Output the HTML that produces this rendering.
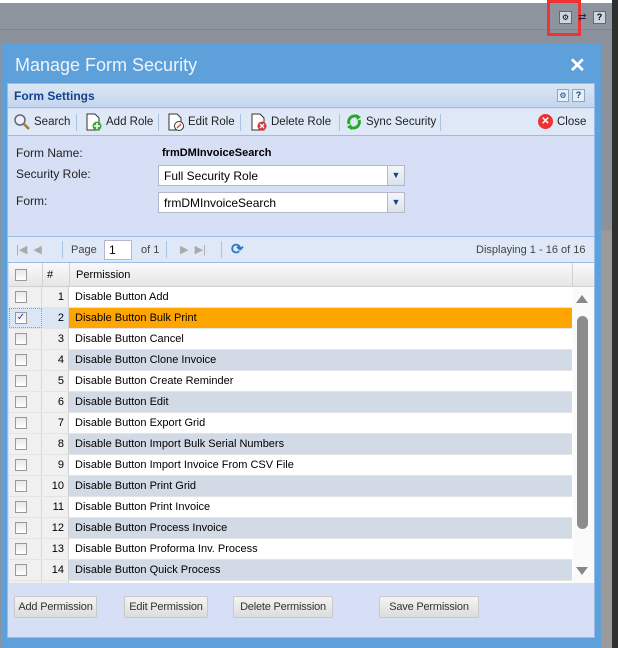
<!DOCTYPE html>
<html><head><meta charset="utf-8"><style>
*{box-sizing:border-box;margin:0;padding:0}
body{width:618px;height:648px;overflow:hidden;background:#8b929c;font-family:"Liberation Sans",sans-serif;font-size:11px;color:#000;position:relative}
.a{position:absolute}
.cb{position:absolute;width:12px;height:12px;border:1px solid #999;background:linear-gradient(#e8e8e8,#fff)}
.row{position:absolute;left:9px;width:563px;height:21px;border-bottom:1px solid #e4e4e4}
.row .c1{position:absolute;left:0;width:33px;height:20px;background:#f0f0f0;border-right:1px solid #d8d8d8}
.row .c2{position:absolute;left:33px;width:27px;height:20px;background:#f0f0f0;border-right:1px solid #d0d0d0;text-align:right;padding-right:4px;line-height:20px}
.row .c3{position:absolute;left:60px;right:0;height:20px;line-height:20px;padding-left:6px}
.btn{position:absolute;top:596px;height:22px;border:1px solid #c8c8c8;border-radius:2px;background:linear-gradient(#f4f4f4,#dcdcdc);text-align:center;line-height:20px;color:#333;white-space:nowrap;font-size:11px;letter-spacing:-0.2px}
.tb{position:absolute;top:116px;color:#222;font-size:11.5px;white-space:nowrap}
.sep{position:absolute;width:1px;height:17px;background:#a9c3e2}
svg.ic{position:absolute;top:113px}
</style></head><body>
<div class="a" style="left:0;top:0;width:618px;height:3px;background:#fff"></div>
<div class="a" style="left:0;top:3px;width:612px;height:27px;background:#8d949e;border-bottom:1px solid #7b8593"></div>
<div class="a" style="left:612px;top:0;width:6px;height:648px;background:#2f2f2f"></div>
<div class="a" style="left:601px;top:230px;width:11px;height:418px;background:#9a9a9a"></div>
<div class="a" style="left:547px;top:0;width:34px;height:36px;border:3px solid #e33"></div>
<div class="a" style="left:559px;top:11px;width:13px;height:13px;background:#cfd6e0;border:1px solid #667;font-size:8px;text-align:center;line-height:11px">⚙</div>
<div class="a" style="left:578px;top:11px;width:12px;height:13px;color:#224;font-size:10px;line-height:13px">⇄</div>
<div class="a" style="left:593px;top:11px;width:13px;height:13px;background:#cfd6e0;border:1px solid #667;font-size:9px;font-weight:bold;text-align:center;line-height:11px">?</div>

<div class="a" style="left:1px;top:43px;width:600px;height:605px;background:#5ea0da"></div>
<div class="a" style="left:15px;top:55px;color:#eef4fb;font-size:18px">Manage Form Security</div>
<div class="a" style="left:569px;top:53px;color:#fff;font-size:20px;font-weight:bold">✕</div>

<div class="a" style="left:7px;top:83px;width:588px;height:555px;background:#d6dff5;border:1px solid #99bbe8"></div>
<div class="a" style="left:8px;top:84px;width:586px;height:24px;background:linear-gradient(#dae6f5,#c4d6ee);border-bottom:1px solid #99bbe8"></div>
<div class="a" style="left:14px;top:89px;color:#15428b;font-weight:bold;font-size:12px">Form Settings</div>
<div class="a" style="left:557px;top:89px;width:12px;height:13px;background:#e6eef9;border:1px solid #8ab;font-size:8px;text-align:center;line-height:11px;color:#15428b">⚙</div>
<div class="a" style="left:572px;top:89px;width:13px;height:13px;background:#e6eef9;border:1px solid #8ab;font-size:9px;font-weight:bold;text-align:center;line-height:11px;color:#15428b">?</div>
<div class="a" style="left:8px;top:109px;width:586px;height:27px;background:#dfe8f6;border-bottom:1px solid #99bbe8"></div>
<svg class="ic" style="left:13px" width="18" height="18"><circle cx="7" cy="7" r="5" fill="#eef" stroke="#667" stroke-width="1.5"/><line x1="10.5" y1="10.5" x2="16" y2="16" stroke="#a77a30" stroke-width="2.5"/></svg>
<div class="tb" style="left:34px">Search</div>
<div class="sep" style="left:76px;top:114px"></div>
<svg class="ic" style="left:85px" width="18" height="18"><path d="M2 1h8l4 4v12H2z" fill="#fff" stroke="#333"/><circle cx="12" cy="13" r="4.5" fill="#3a3"/><path d="M12 10v6M9 13h6" stroke="#fff" stroke-width="1.5"/></svg>
<div class="tb" style="left:106px">Add Role</div>
<div class="sep" style="left:158px;top:114px"></div>
<svg class="ic" style="left:167px" width="18" height="18"><path d="M2 1h8l4 4v12H2z" fill="#fff" stroke="#333"/><circle cx="12" cy="13" r="4.5" fill="#fff" stroke="#333"/><path d="M10 15l4-4" stroke="#d52" stroke-width="1.5"/></svg>
<div class="tb" style="left:188px">Edit Role</div>
<div class="sep" style="left:240px;top:114px"></div>
<svg class="ic" style="left:250px" width="18" height="18"><path d="M2 1h8l4 4v12H2z" fill="#fff" stroke="#333"/><circle cx="12" cy="13" r="4.5" fill="#d33"/><path d="M10 11l4 4M14 11l-4 4" stroke="#fff" stroke-width="1.3"/></svg>
<div class="tb" style="left:271px">Delete Role</div>
<div class="sep" style="left:339px;top:114px"></div>
<svg class="ic" style="left:345px" width="18" height="18"><path d="M4 11A6 6 0 0 1 13 4" stroke="#2a2" stroke-width="3" fill="none"/><path d="M14 7A6 6 0 0 1 5 14" stroke="#2a2" stroke-width="3" fill="none"/><path d="M11 1l5 3-4 3z M7 17l-5-3 4-3z" fill="#2a2"/></svg>
<div class="tb" style="left:366px">Sync Security</div>
<div class="sep" style="left:440px;top:114px"></div>
<div class="a" style="left:538px;top:114px;width:15px;height:15px;border-radius:50%;background:#e33;color:#fff;font-size:10px;text-align:center;line-height:15px;font-weight:bold">✕</div>
<div class="tb" style="left:557px">Close</div>

<div class="a" style="left:16px;top:146px;font-size:12px;color:#222">Form Name:</div>
<div class="a" style="left:162px;top:147px;font-size:11px;font-weight:bold">frmDMInvoiceSearch</div>
<div class="a" style="left:16px;top:167px;font-size:12px;color:#222">Security Role:</div>
<div class="a" style="left:158px;top:165px;width:247px;height:21px;background:#fff;border:1px solid #b5b8c8"></div>
<div class="a" style="left:164px;top:169px;font-size:12px">Full Security Role</div>
<div class="a" style="left:387px;top:166px;width:17px;height:19px;background:linear-gradient(#f3f6fa,#dde3eb);border-left:1px solid #b5b8c8;color:#15428b;font-size:9px;text-align:center;line-height:19px">▼</div>
<div class="a" style="left:16px;top:194px;font-size:12px;color:#222">Form:</div>
<div class="a" style="left:158px;top:192px;width:247px;height:21px;background:#fff;border:1px solid #b5b8c8"></div>
<div class="a" style="left:164px;top:196px;font-size:12px">frmDMInvoiceSearch</div>
<div class="a" style="left:387px;top:193px;width:17px;height:19px;background:linear-gradient(#f3f6fa,#dde3eb);border-left:1px solid #b5b8c8;color:#15428b;font-size:9px;text-align:center;line-height:19px">▼</div>

<div class="a" style="left:8px;top:236px;width:586px;height:27px;background:#dfe8f6;border-top:1px solid #99bbe8;border-bottom:1px solid #99bbe8"></div>
<div class="a" style="left:16px;top:243px;color:#aaa;font-size:11px">|◀ &nbsp;◀</div>
<div class="sep" style="left:62px;top:241px"></div>
<div class="a" style="left:71px;top:244px;color:#444;font-size:11px">Page</div>
<div class="a" style="left:104px;top:240px;width:28px;height:20px;background:#fff;border:1px solid #b5b8c8;padding-left:4px;line-height:18px;font-size:12px">1</div>
<div class="a" style="left:141px;top:244px;color:#444;font-size:11px">of 1</div>
<div class="sep" style="left:166px;top:241px"></div>
<div class="a" style="left:180px;top:243px;color:#aaa;font-size:11px">▶ &nbsp;▶|</div>
<div class="sep" style="left:221px;top:241px"></div>
<div class="a" style="left:231px;top:240px;color:#2a78cc;font-size:15px;font-weight:bold">⟳</div>
<div class="a" style="left:476px;top:244px;color:#444;font-size:11px">Displaying 1 - 16 of 16</div>

<div class="a" style="left:9px;top:263px;width:585px;height:320px;background:#fff"></div>
<div class="a" style="left:9px;top:263px;width:585px;height:24px;background:linear-gradient(#f9f9f9,#e6e6e6);border-bottom:1px solid #d0d0d0"></div>
<div class="a" style="left:42px;top:263px;width:1px;height:24px;background:#d0d0d0"></div>
<div class="a" style="left:69px;top:263px;width:1px;height:24px;background:#d0d0d0"></div>
<div class="a" style="left:572px;top:263px;width:1px;height:24px;background:#d0d0d0"></div>
<div class="cb" style="left:15px;top:269px"></div>
<div class="a" style="left:47px;top:269px;font-size:11px">#</div>
<div class="a" style="left:76px;top:269px;font-size:11px">Permission</div>

<div class="row" style="top:287px"><div class="c1"><div class="cb" style="left:6px;top:4px"></div></div><div class="c2">1</div><div class="c3">Disable Button Add</div></div>
<div class="row" style="top:308px"><div class="c1" style="background:#dbe6f5;border:1px dotted #99a"><div class="cb" style="left:5px;top:3px;color:#33a;font-size:10px;line-height:10px;text-align:center">✓</div></div><div class="c2" style="background:#dbe6f5">2</div><div class="c3" style="background:#ffa500">Disable Button Bulk Print</div></div>
<div class="row" style="top:329px"><div class="c1"><div class="cb" style="left:6px;top:4px"></div></div><div class="c2">3</div><div class="c3">Disable Button Cancel</div></div>
<div class="row" style="top:350px"><div class="c1"><div class="cb" style="left:6px;top:4px"></div></div><div class="c2">4</div><div class="c3" style="background:#d2dae6">Disable Button Clone Invoice</div></div>
<div class="row" style="top:371px"><div class="c1"><div class="cb" style="left:6px;top:4px"></div></div><div class="c2">5</div><div class="c3">Disable Button Create Reminder</div></div>
<div class="row" style="top:392px"><div class="c1"><div class="cb" style="left:6px;top:4px"></div></div><div class="c2">6</div><div class="c3" style="background:#d2dae6">Disable Button Edit</div></div>
<div class="row" style="top:413px"><div class="c1"><div class="cb" style="left:6px;top:4px"></div></div><div class="c2">7</div><div class="c3">Disable Button Export Grid</div></div>
<div class="row" style="top:434px"><div class="c1"><div class="cb" style="left:6px;top:4px"></div></div><div class="c2">8</div><div class="c3" style="background:#d2dae6">Disable Button Import Bulk Serial Numbers</div></div>
<div class="row" style="top:455px"><div class="c1"><div class="cb" style="left:6px;top:4px"></div></div><div class="c2">9</div><div class="c3">Disable Button Import Invoice From CSV File</div></div>
<div class="row" style="top:476px"><div class="c1"><div class="cb" style="left:6px;top:4px"></div></div><div class="c2">10</div><div class="c3" style="background:#d2dae6">Disable Button Print Grid</div></div>
<div class="row" style="top:497px"><div class="c1"><div class="cb" style="left:6px;top:4px"></div></div><div class="c2">11</div><div class="c3">Disable Button Print Invoice</div></div>
<div class="row" style="top:518px"><div class="c1"><div class="cb" style="left:6px;top:4px"></div></div><div class="c2">12</div><div class="c3" style="background:#d2dae6">Disable Button Process Invoice</div></div>
<div class="row" style="top:539px"><div class="c1"><div class="cb" style="left:6px;top:4px"></div></div><div class="c2">13</div><div class="c3">Disable Button Proforma Inv. Process</div></div>
<div class="row" style="top:560px"><div class="c1"><div class="cb" style="left:6px;top:4px"></div></div><div class="c2">14</div><div class="c3" style="background:#d2dae6">Disable Button Quick Process</div></div>
<div class="row" style="top:581px;height:2px;border:0"><div class="c1" style="height:2px"></div><div class="c2" style="height:2px"></div></div>

<div class="a" style="left:573px;top:287px;width:21px;height:296px;background:#fafafa"></div>
<div class="a" style="left:576px;top:295px;width:0;height:0;border-left:6px solid transparent;border-right:6px solid transparent;border-bottom:8px solid #888"></div>
<div class="a" style="left:577px;top:316px;width:11px;height:213px;border-radius:6px;background:#8c8c8c"></div>
<div class="a" style="left:576px;top:567px;width:0;height:0;border-left:6px solid transparent;border-right:6px solid transparent;border-top:8px solid #888"></div>

<div class="btn" style="left:14px;width:83px">Add Permission</div>
<div class="btn" style="left:124px;width:84px">Edit Permission</div>
<div class="btn" style="left:233px;width:100px">Delete Permission</div>
<div class="btn" style="left:379px;width:100px">Save Permission</div>
</body></html>
